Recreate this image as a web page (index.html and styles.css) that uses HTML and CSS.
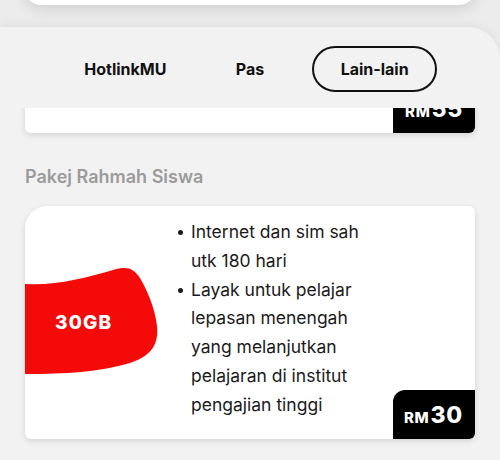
FILE: index.html
```html
<!DOCTYPE html>
<html>
<head>
<meta charset="utf-8">
<link rel="stylesheet" href="styles.css">
</head>
<body>
<div class="top-card"></div>
<div class="panel">
  <nav class="tabs">
    <div class="tab">HotlinkMU</div>
    <div class="tab">Pas</div>
    <div class="tab active">Lain-lain</div>
  </nav>
  <div class="scroll">
    <div class="card card-prev">
      <div class="card-body"></div>
      <div class="price"><span class="cur">RM</span><span class="amt">55</span></div>
    </div>
    <h2 class="section-title">Pakej Rahmah Siswa</h2>
    <div class="card card-main">
      <div class="blob">
        <svg class="blob-shape" viewBox="0 0 134 106" width="134" height="106" aria-hidden="true">
          <path d="M0,16 C30,18 60,10 88,2 C102,-2 108,0 115,10 C122,22 130,40 132,58 C134,78 125,88 105,95 C75,104 40,106 0,106 Z" fill="#f50a0a"/>
        </svg>
        <span class="blob-label">30GB</span>
      </div>
      <ul class="features">
        <li>Internet dan sim sah utk 180 hari</li>
        <li>Layak untuk pelajar lepasan menengah yang melanjutkan pelajaran di institut pengajian tinggi</li>
      </ul>
      <div class="price"><span class="cur">RM</span><span class="amt">30</span></div>
    </div>
  </div>
</div>
</body>
</html>
```

FILE: styles.css
```css
* { box-sizing: border-box; }
html, body { margin: 0; padding: 0; }
body {
  width: 500px;
  height: 460px;
  overflow: hidden;
  background: #ececec;
  font-family: "Inter", "Liberation Sans", sans-serif;
  color: #111;
}
.top-card {
  margin: -35px 22px 0;
  height: 40px;
  background: #fff;
  border-radius: 0 0 20px 20px;
  box-shadow: 0 4px 14px rgba(0,0,0,0.12);
}
.panel {
  margin-top: 22px;
  background: #f2f2f2;
  border-top-right-radius: 32px;
  box-shadow: 0 -3px 10px rgba(0,0,0,0.05);
  height: 433px;
}
.tabs {
  display: grid;
  grid-template-columns: repeat(3, 1fr);
  padding: 19px 63px 0;
}
.tab {
  height: 46px;
  display: flex;
  align-items: center;
  justify-content: center;
  font-weight: 700;
  font-size: 16px;
  color: #111;
  border-radius: 23px;
  border: 2.5px solid transparent;
  padding-bottom: 1px;
}
.tab.active { border-color: #111; }
.scroll {
  margin-top: 16px;
  height: 340px;
  overflow: hidden;
  padding: 0 25px;
}
.card {
  position: relative;
  background: #fff;
  border-radius: 6px;
  box-shadow: 0 2px 6px rgba(0,0,0,0.13);
  display: flex;
}
.card-prev {
  height: 233px;
  margin-top: -208px;
}
.section-title {
  margin: 33px 0 0;
  font-size: 18px;
  font-weight: 600;
  color: #9b9b9b;
  line-height: 22px;
}
.card-main {
  margin-top: 18px;
  height: 233px;
  border-top-left-radius: 22px;
}
.blob {
  position: relative;
  flex: 0 0 134px;
  height: 106px;
  margin-top: 62px;
  display: flex;
  align-items: center;
  padding-left: 30px;
}
.blob-shape {
  position: absolute;
  left: 0;
  top: 0;
}
.blob-label {
  position: relative;
  color: #fff;
  font-weight: 800;
  font-size: 19px;
  letter-spacing: 1.2px;
  padding-top: 3px;
}
.features {
  list-style: none;
  margin: 0;
  padding: 12px 0 0 19px;
  width: 215px;
  font-size: 17.5px;
  line-height: 28.8px;
  color: #1a1a1a;
}
.features li {
  position: relative;
  padding-left: 13px;
}
.features li::before {
  content: "";
  position: absolute;
  left: 0;
  top: 12px;
  width: 5px;
  height: 5px;
  border-radius: 50%;
  background: #1a1a1a;
}
.price {
  position: absolute;
  right: 0;
  bottom: 0;
  width: 82px;
  height: 49px;
  background: #000;
  color: #fff;
  border-radius: 12px 0 6px 0;
  display: flex;
  align-items: baseline;
  justify-content: flex-end;
  padding: 13px 12px 0 0;
  font-weight: 800;
}
.price .cur { font-size: 15px; letter-spacing: 0.6px; margin-right: 1px; }
.price .amt { font-size: 23px; line-height: 24px; letter-spacing: 0.8px; }
```
